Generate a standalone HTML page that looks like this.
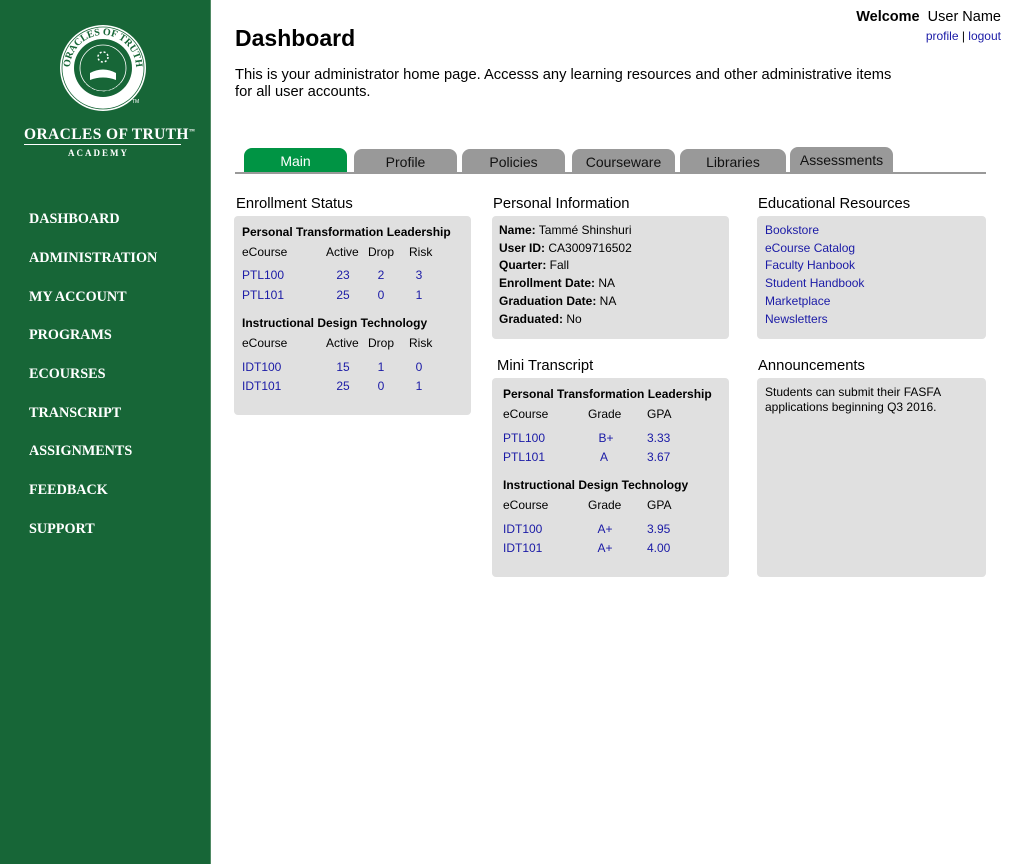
<!DOCTYPE html>
<html><head><meta charset="utf-8"><style>
*{margin:0;padding:0;box-sizing:border-box}
body{width:1024px;height:864px;background:#fff;font-family:"Liberation Sans",sans-serif;color:#000;position:relative;overflow:hidden}
.a{position:absolute;white-space:nowrap}
#side{position:absolute;left:0;top:0;width:211px;height:864px;background:#176637;border-right:1px solid #4f8a64}
.nav{position:absolute;left:29px;color:#fff;font-family:"Liberation Serif",serif;font-weight:bold;font-size:14.2px;letter-spacing:0}
.tab{position:absolute;height:25px;background:#999;border-radius:8px 8px 0 0;text-align:center;font-size:14px;line-height:26px;color:#111}
.box{position:absolute;background:#e0e0e0;border-radius:4px}
h2{position:absolute;font-size:14.8px;font-weight:normal;white-space:nowrap}
.t{position:absolute;font-size:12px;white-space:nowrap;line-height:14px}
.l{color:#1a1aa6}
.c{transform:translateX(-50%)}
</style></head><body>
<div id="side">
<svg class="a" style="left:58px;top:23px" width="90" height="90" viewBox="0 0 90 90">
<defs><path id="arc" d="M12 45 A33 33 0 0 1 78 45"/><path id="arc2" d="M18 52 A28 28 0 0 0 72 52"/></defs>
<circle cx="45" cy="45" r="43" fill="#fff"/>
<circle cx="45" cy="45" r="41" fill="none" stroke="#176637" stroke-width="0.8"/>
<circle cx="45" cy="45" r="29" fill="#176637"/>
<circle cx="45" cy="45" r="23" fill="none" stroke="#fff" stroke-width="0.8"/>
<path d="M32 50 Q45 43 58 50 L58 57 Q45 52 32 57Z" fill="#fff"/>
<circle cx="45" cy="34" r="5" fill="none" stroke="#fff" stroke-width="1.5" stroke-dasharray="2 2"/>
<text font-family="Liberation Serif" font-size="10" font-weight="bold" fill="#176637"><textPath href="#arc" startOffset="50%" text-anchor="middle">ORACLES OF TRUTH</textPath></text>
<text font-family="Liberation Serif" font-size="7" font-weight="bold" fill="#176637" letter-spacing="2"><textPath href="#arc2" startOffset="50%" text-anchor="middle">ACADEMY</textPath></text>
</svg>
<div class="a" style="left:132px;top:99px;color:#fff;font-size:5px">TM</div>
<div class="a" style="left:24px;top:126px;color:#fff;font-family:'Liberation Serif',serif;font-size:15.5px;letter-spacing:0.4px;font-weight:bold">ORACLES OF TRUTH<sup style="font-size:6px">™</sup></div>
<div class="a" style="left:24px;top:144px;width:157px;height:1px;background:#fff"></div>
<div class="a" style="left:68px;top:148px;color:#fff;font-family:'Liberation Serif',serif;font-weight:bold;font-size:9px;letter-spacing:2px">ACADEMY</div>
<div class="nav" style="top:211px">DASHBOARD</div>
<div class="nav" style="top:250px">ADMINISTRATION</div>
<div class="nav" style="top:289px">MY ACCOUNT</div>
<div class="nav" style="top:327px">PROGRAMS</div>
<div class="nav" style="top:366px">ECOURSES</div>
<div class="nav" style="top:405px">TRANSCRIPT</div>
<div class="nav" style="top:443px">ASSIGNMENTS</div>
<div class="nav" style="top:482px">FEEDBACK</div>
<div class="nav" style="top:521px">SUPPORT</div>
</div>

<div class="a" style="left:235px;top:25px;font-size:23px;font-weight:bold">Dashboard</div>
<div class="a" style="right:23px;top:9px;font-size:14.5px"><b>Welcome</b>&nbsp; User Name</div>
<div class="a" style="right:23px;top:29px;font-size:12px"><span class="l">profile</span> | <span class="l">logout</span></div>
<div class="a" style="left:235px;top:67px;font-size:14.7px;line-height:17px">This is your administrator home page. Accesss any learning resources and other administrative items<br>for all user accounts.</div>

<div class="tab" style="left:244px;top:148px;width:103px;background:#009444;color:#fff">Main</div>
<div class="tab" style="left:354px;top:149px;width:103px">Profile</div>
<div class="tab" style="left:462px;top:149px;width:103px">Policies</div>
<div class="tab" style="left:572px;top:149px;width:103px">Courseware</div>
<div class="tab" style="left:680px;top:149px;width:106px">Libraries</div>
<div class="tab" style="left:790px;top:147px;width:103px">Assessments</div>
<div class="a" style="left:235px;top:172px;width:751px;height:2px;background:#999"></div>

<h2 style="left:236px;top:196px">Enrollment Status</h2>
<div class="box" style="left:234px;top:216px;width:237px;height:199px"></div>
<div class="t" style="left:242px;top:225px"><b>Personal Transformation Leadership</b></div>
<div class="t" style="left:242px;top:245px">eCourse</div><div class="t" style="left:326px;top:245px">Active</div><div class="t" style="left:368px;top:245px">Drop</div><div class="t" style="left:409px;top:245px">Risk</div>
<div class="t l" style="left:242px;top:268px">PTL100</div><div class="t l c" style="left:343px;top:268px">23</div><div class="t l c" style="left:381px;top:268px">2</div><div class="t l c" style="left:419px;top:268px">3</div>
<div class="t l" style="left:242px;top:288px">PTL101</div><div class="t l c" style="left:343px;top:288px">25</div><div class="t l c" style="left:381px;top:288px">0</div><div class="t l c" style="left:419px;top:288px">1</div>
<div class="t" style="left:242px;top:316px"><b>Instructional Design Technology</b></div>
<div class="t" style="left:242px;top:336px">eCourse</div><div class="t" style="left:326px;top:336px">Active</div><div class="t" style="left:368px;top:336px">Drop</div><div class="t" style="left:409px;top:336px">Risk</div>
<div class="t l" style="left:242px;top:360px">IDT100</div><div class="t l c" style="left:343px;top:360px">15</div><div class="t l c" style="left:381px;top:360px">1</div><div class="t l c" style="left:419px;top:360px">0</div>
<div class="t l" style="left:242px;top:379px">IDT101</div><div class="t l c" style="left:343px;top:379px">25</div><div class="t l c" style="left:381px;top:379px">0</div><div class="t l c" style="left:419px;top:379px">1</div>

<h2 style="left:493px;top:196px">Personal Information</h2>
<div class="box" style="left:492px;top:216px;width:237px;height:123px"></div>
<div class="t" style="left:499px;top:222px;line-height:17.7px"><b>Name:</b> Tammé Shinshuri<br><b>User ID:</b> CA3009716502<br><b>Quarter:</b> Fall<br><b>Enrollment Date:</b> NA<br><b>Graduation Date:</b> NA<br><b>Graduated:</b> No</div>

<h2 style="left:758px;top:196px">Educational Resources</h2>
<div class="box" style="left:757px;top:216px;width:229px;height:123px"></div>
<div class="t l" style="left:765px;top:222px;line-height:17.7px">Bookstore<br>eCourse Catalog<br>Faculty Hanbook<br>Student Handbook<br>Marketplace<br>Newsletters</div>

<h2 style="left:497px;top:358px">Mini Transcript</h2>
<div class="box" style="left:492px;top:378px;width:237px;height:199px"></div>
<div class="t" style="left:503px;top:387px"><b>Personal Transformation Leadership</b></div>
<div class="t" style="left:503px;top:407px">eCourse</div><div class="t" style="left:588px;top:407px">Grade</div><div class="t" style="left:647px;top:407px">GPA</div>
<div class="t l" style="left:503px;top:431px">PTL100</div><div class="t l c" style="left:606px;top:431px">B+</div><div class="t l" style="left:647px;top:431px">3.33</div>
<div class="t l" style="left:503px;top:450px">PTL101</div><div class="t l c" style="left:604px;top:450px">A</div><div class="t l" style="left:647px;top:450px">3.67</div>
<div class="t" style="left:503px;top:478px"><b>Instructional Design Technology</b></div>
<div class="t" style="left:503px;top:498px">eCourse</div><div class="t" style="left:588px;top:498px">Grade</div><div class="t" style="left:647px;top:498px">GPA</div>
<div class="t l" style="left:503px;top:522px">IDT100</div><div class="t l c" style="left:605px;top:522px">A+</div><div class="t l" style="left:647px;top:522px">3.95</div>
<div class="t l" style="left:503px;top:541px">IDT101</div><div class="t l c" style="left:605px;top:541px">A+</div><div class="t l" style="left:647px;top:541px">4.00</div>

<h2 style="left:758px;top:358px">Announcements</h2>
<div class="box" style="left:757px;top:378px;width:229px;height:199px"></div>
<div class="t" style="left:765px;top:385px;line-height:14.5px">Students can submit their FASFA<br>applications beginning Q3 2016.</div>
</body></html>
